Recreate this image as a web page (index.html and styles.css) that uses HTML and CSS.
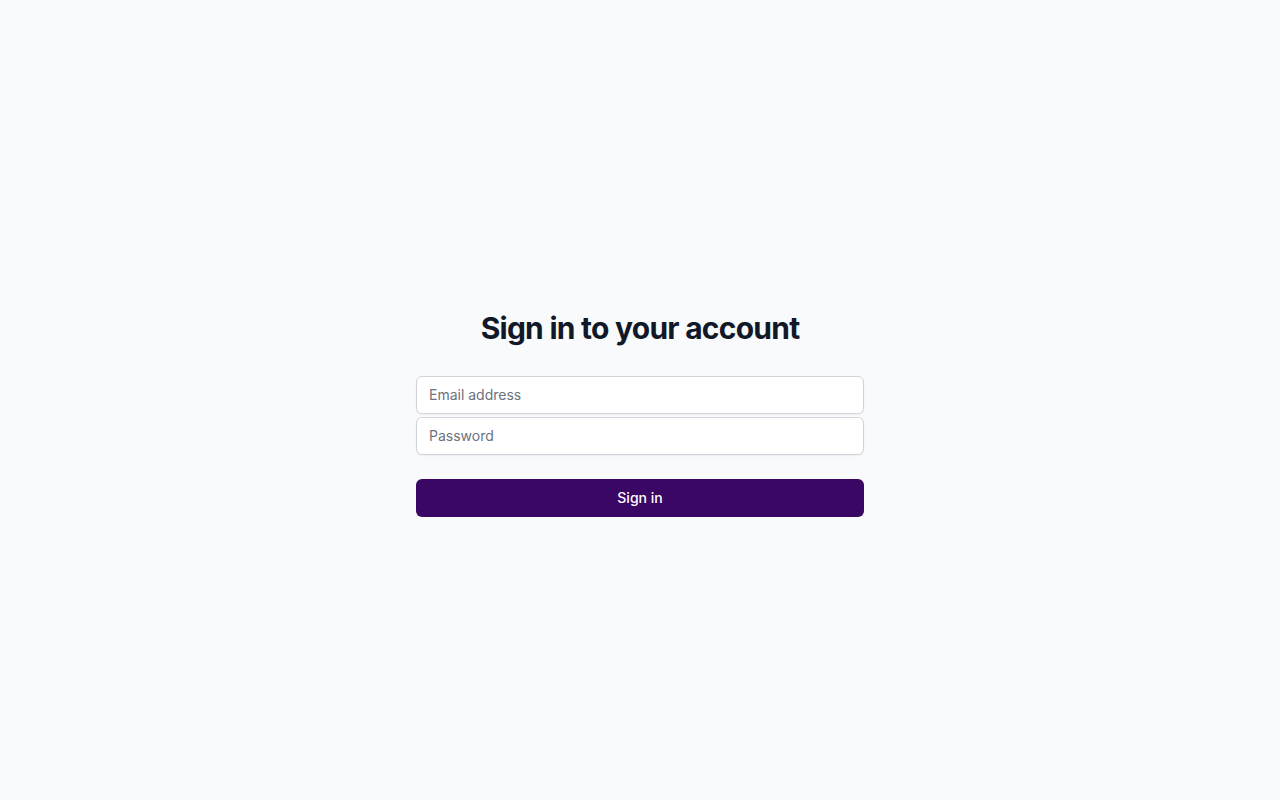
FILE: index.html
```html
<!DOCTYPE html>
<html lang="en">
<head>
<meta charset="utf-8">
<title>Sign in</title>
<link rel="stylesheet" href="styles.css">
</head>
<body>
<main class="page">
  <div class="card">
    <h1 class="title">Sign in to your account</h1>
    <form class="form">
      <div class="fields">
        <input class="field" type="email" placeholder="Email address">
        <input class="field" type="password" placeholder="Password">
      </div>
      <button class="submit" type="button">Sign in</button>
    </form>
  </div>
</main>
</body>
</html>
```

FILE: styles.css
```css
* { box-sizing: border-box; }
html, body { margin: 0; padding: 0; }
body {
  background: #f9fafb;
  font-family: Inter, "Liberation Sans", sans-serif;
  color: #111827;
}
.page {
  min-height: 100vh;
  display: flex;
  align-items: center;
  justify-content: center;
  padding-top: 26px;
}
.card {
  width: 448px;
  display: flex;
  flex-direction: column;
}
.title {
  margin: 0;
  text-align: center;
  font-size: 30px;
  line-height: 36px;
  font-weight: 700;
  letter-spacing: -0.75px;
  color: #111827;
}
.form {
  margin-top: 30px;
  display: flex;
  flex-direction: column;
  gap: 24px;
}
.fields {
  display: flex;
  flex-direction: column;
  gap: 3px;
}
.field {
  display: block;
  width: 100%;
  height: 38px;
  padding: 0 12px;
  border: 1px solid #d1d5db;
  border-radius: 6px;
  background: #fff;
  font-family: Inter, "Liberation Sans", sans-serif;
  font-size: 14px;
  color: #111827;
  box-shadow: 0 1px 2px rgba(0,0,0,0.05);
  outline: none;
}
.field::placeholder { color: #6b7280; }
.submit {
  display: block;
  width: 100%;
  height: 38px;
  border: 0;
  border-radius: 6px;
  background: #3b0764;
  color: #fff;
  font-family: Inter, "Liberation Sans", sans-serif;
  font-size: 14px;
  font-weight: 500;
  cursor: pointer;
}
```
